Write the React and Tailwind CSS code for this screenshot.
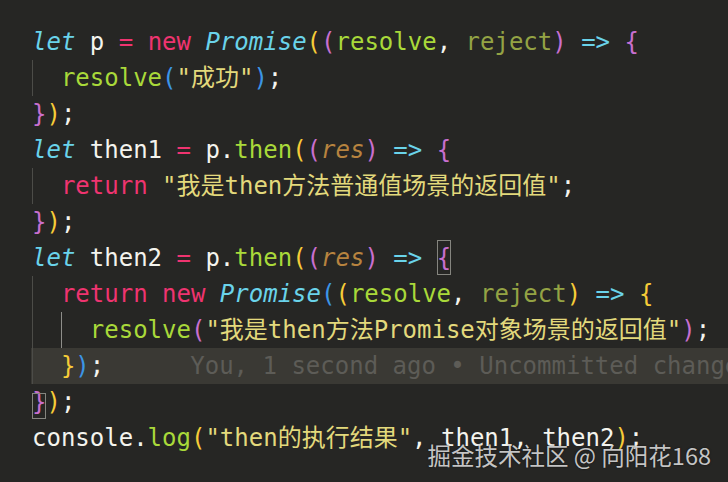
import React from "react";

const W = "text-[#f4f4ee]";
const K = "text-[#ef3470]";
const C = "text-[#6ad3ea] italic";
const A = "text-[#6ad3ea]";
const G = "text-[#a9d93a]";
const O = "text-[#94a344]";
const S = "text-[#e3d97c]";
const R = "text-[#b7833f] italic";
const Y = "text-[#f6cc38]";
const P = "text-[#c86fcf]";
const B = "text-[#3c95e6]";

function Indent({ active }) {
  return (
    <span
      className={
        "inline-block align-top w-[28.9px] h-9 border-l " +
        (active ? "border-[#8e8e8a]" : "border-[#4c4c48]")
      }
    />
  );
}

function T({ c, children }) {
  return <span className={c}>{children}</span>;
}

function Box({ c, top, h, children }) {
  return (
    <span className={"relative inline-block align-top h-9 " + c}>
      {children}
      <span className={"absolute left-0 right-0 border border-[#85857f] " + top + " " + h} />
    </span>
  );
}

function Line({ children, hl }) {
  return (
    <div
      className={
        "h-9 leading-9 pl-px whitespace-pre overflow-hidden " +
        (hl ? "bg-[#3a3934]" : "")
      }
    >
      {children}
    </div>
  );
}

export default function App() {
  return (
    <div
      className="relative w-[728px] h-[482px] overflow-hidden bg-[#262624] pt-6 pl-[31px] text-[24px] leading-9"
      style={{ fontFamily: '"DejaVu Sans Mono", "Noto Sans CJK SC", monospace' }}
    >
      <Line>
        <T c={C}>let</T>{" "}<T c={W}>p</T>{" "}<T c={K}>=</T>{" "}<T c={K}>new</T>{" "}
        <T c={C}>Promise</T>
        <T c={Y}>(</T>
        <T c={P}>(</T>
        <T c={G}>resolve</T>
        <T c={W}>,</T>{" "}<T c={O}>reject</T>
        <T c={P}>)</T>{" "}<T c={A}>=&gt;</T>{" "}<T c={P}>{"{"}</T>
      </Line>
      <Line>
        <Indent />
        <T c={G}>resolve</T>
        <T c={B}>(</T>
        <T c={S}>"成功"</T>
        <T c={B}>)</T>
        <T c={W}>;</T>
      </Line>
      <Line>
        <T c={P}>{"}"}</T>
        <T c={Y}>)</T>
        <T c={W}>;</T>
      </Line>
      <Line>
        <T c={C}>let</T>{" "}<T c={W}>then1</T>{" "}<T c={K}>=</T>{" "}<T c={W}>p.</T>
        <T c={G}>then</T>
        <T c={Y}>(</T>
        <T c={P}>(</T>
        <T c={R}>res</T>
        <T c={P}>)</T>{" "}<T c={A}>=&gt;</T>{" "}<T c={P}>{"{"}</T>
      </Line>
      <Line>
        <Indent />
        <T c={K}>return</T>{" "}<T c={S}>"我是then方法普通值场景的返回值"</T>
        <T c={W}>;</T>
      </Line>
      <Line>
        <T c={P}>{"}"}</T>
        <T c={Y}>)</T>
        <T c={W}>;</T>
      </Line>
      <Line>
        <T c={C}>let</T>{" "}<T c={W}>then2</T>{" "}<T c={K}>=</T>{" "}<T c={W}>p.</T>
        <T c={G}>then</T>
        <T c={Y}>(</T>
        <T c={P}>(</T>
        <T c={R}>res</T>
        <T c={P}>)</T>{" "}<T c={A}>=&gt;</T>{" "}
        <Box c={P} top="top-0" h="h-[35px]">{"{"}</Box>
      </Line>
      <Line>
        <Indent />
        <T c={K}>return</T>{" "}<T c={K}>new</T>{" "}<T c={C}>Promise</T>
        <T c={B}>(</T>
        <T c={Y}>(</T>
        <T c={G}>resolve</T>
        <T c={W}>,</T>{" "}<T c={O}>reject</T>
        <T c={Y}>)</T>{" "}<T c={A}>=&gt;</T>{" "}<T c={Y}>{"{"}</T>
      </Line>
      <Line>
        <Indent />
        <Indent active />
        <T c={G}>resolve</T>
        <T c={P}>(</T>
        <T c={S}>"我是then方法Promise对象场景的返回值"</T>
        <T c={P}>)</T>
        <T c={W}>;</T>
      </Line>
      <Line hl>
        <Indent />
        <T c={Y}>{"}"}</T>
        <T c={B}>)</T>
        <T c={W}>;</T>
        <span className="ml-[86px] text-[#5d5c57]">
          You, 1 second ago • Uncommitted changes
        </span>
      </Line>
      <Line>
        <Box c={P} top="top-[9px]" h="h-[26px]">{"}"}</Box>
        <T c={Y}>)</T>
        <T c={W}>;</T>
      </Line>
      <Line>
        <T c={W}>console.</T>
        <T c={G}>log</T>
        <T c={Y}>(</T>
        <T c={S}>"then的执行结果"</T>
        <T c={W}>, then1, then2</T>
        <T c={Y}>)</T>
        <T c={W}>;</T>
      </Line>

      <div
        className="absolute right-[17px] bottom-[11px] text-[23.5px] leading-8 text-[#e6e6e6]/85 [text-shadow:0_0_2px_rgba(0,0,0,0.6)]"
        style={{ fontFamily: '"Noto Sans CJK SC", "Noto Sans", sans-serif' }}
      >
        掘金技术社区 @ 向阳花168
      </div>
    </div>
  );
}
